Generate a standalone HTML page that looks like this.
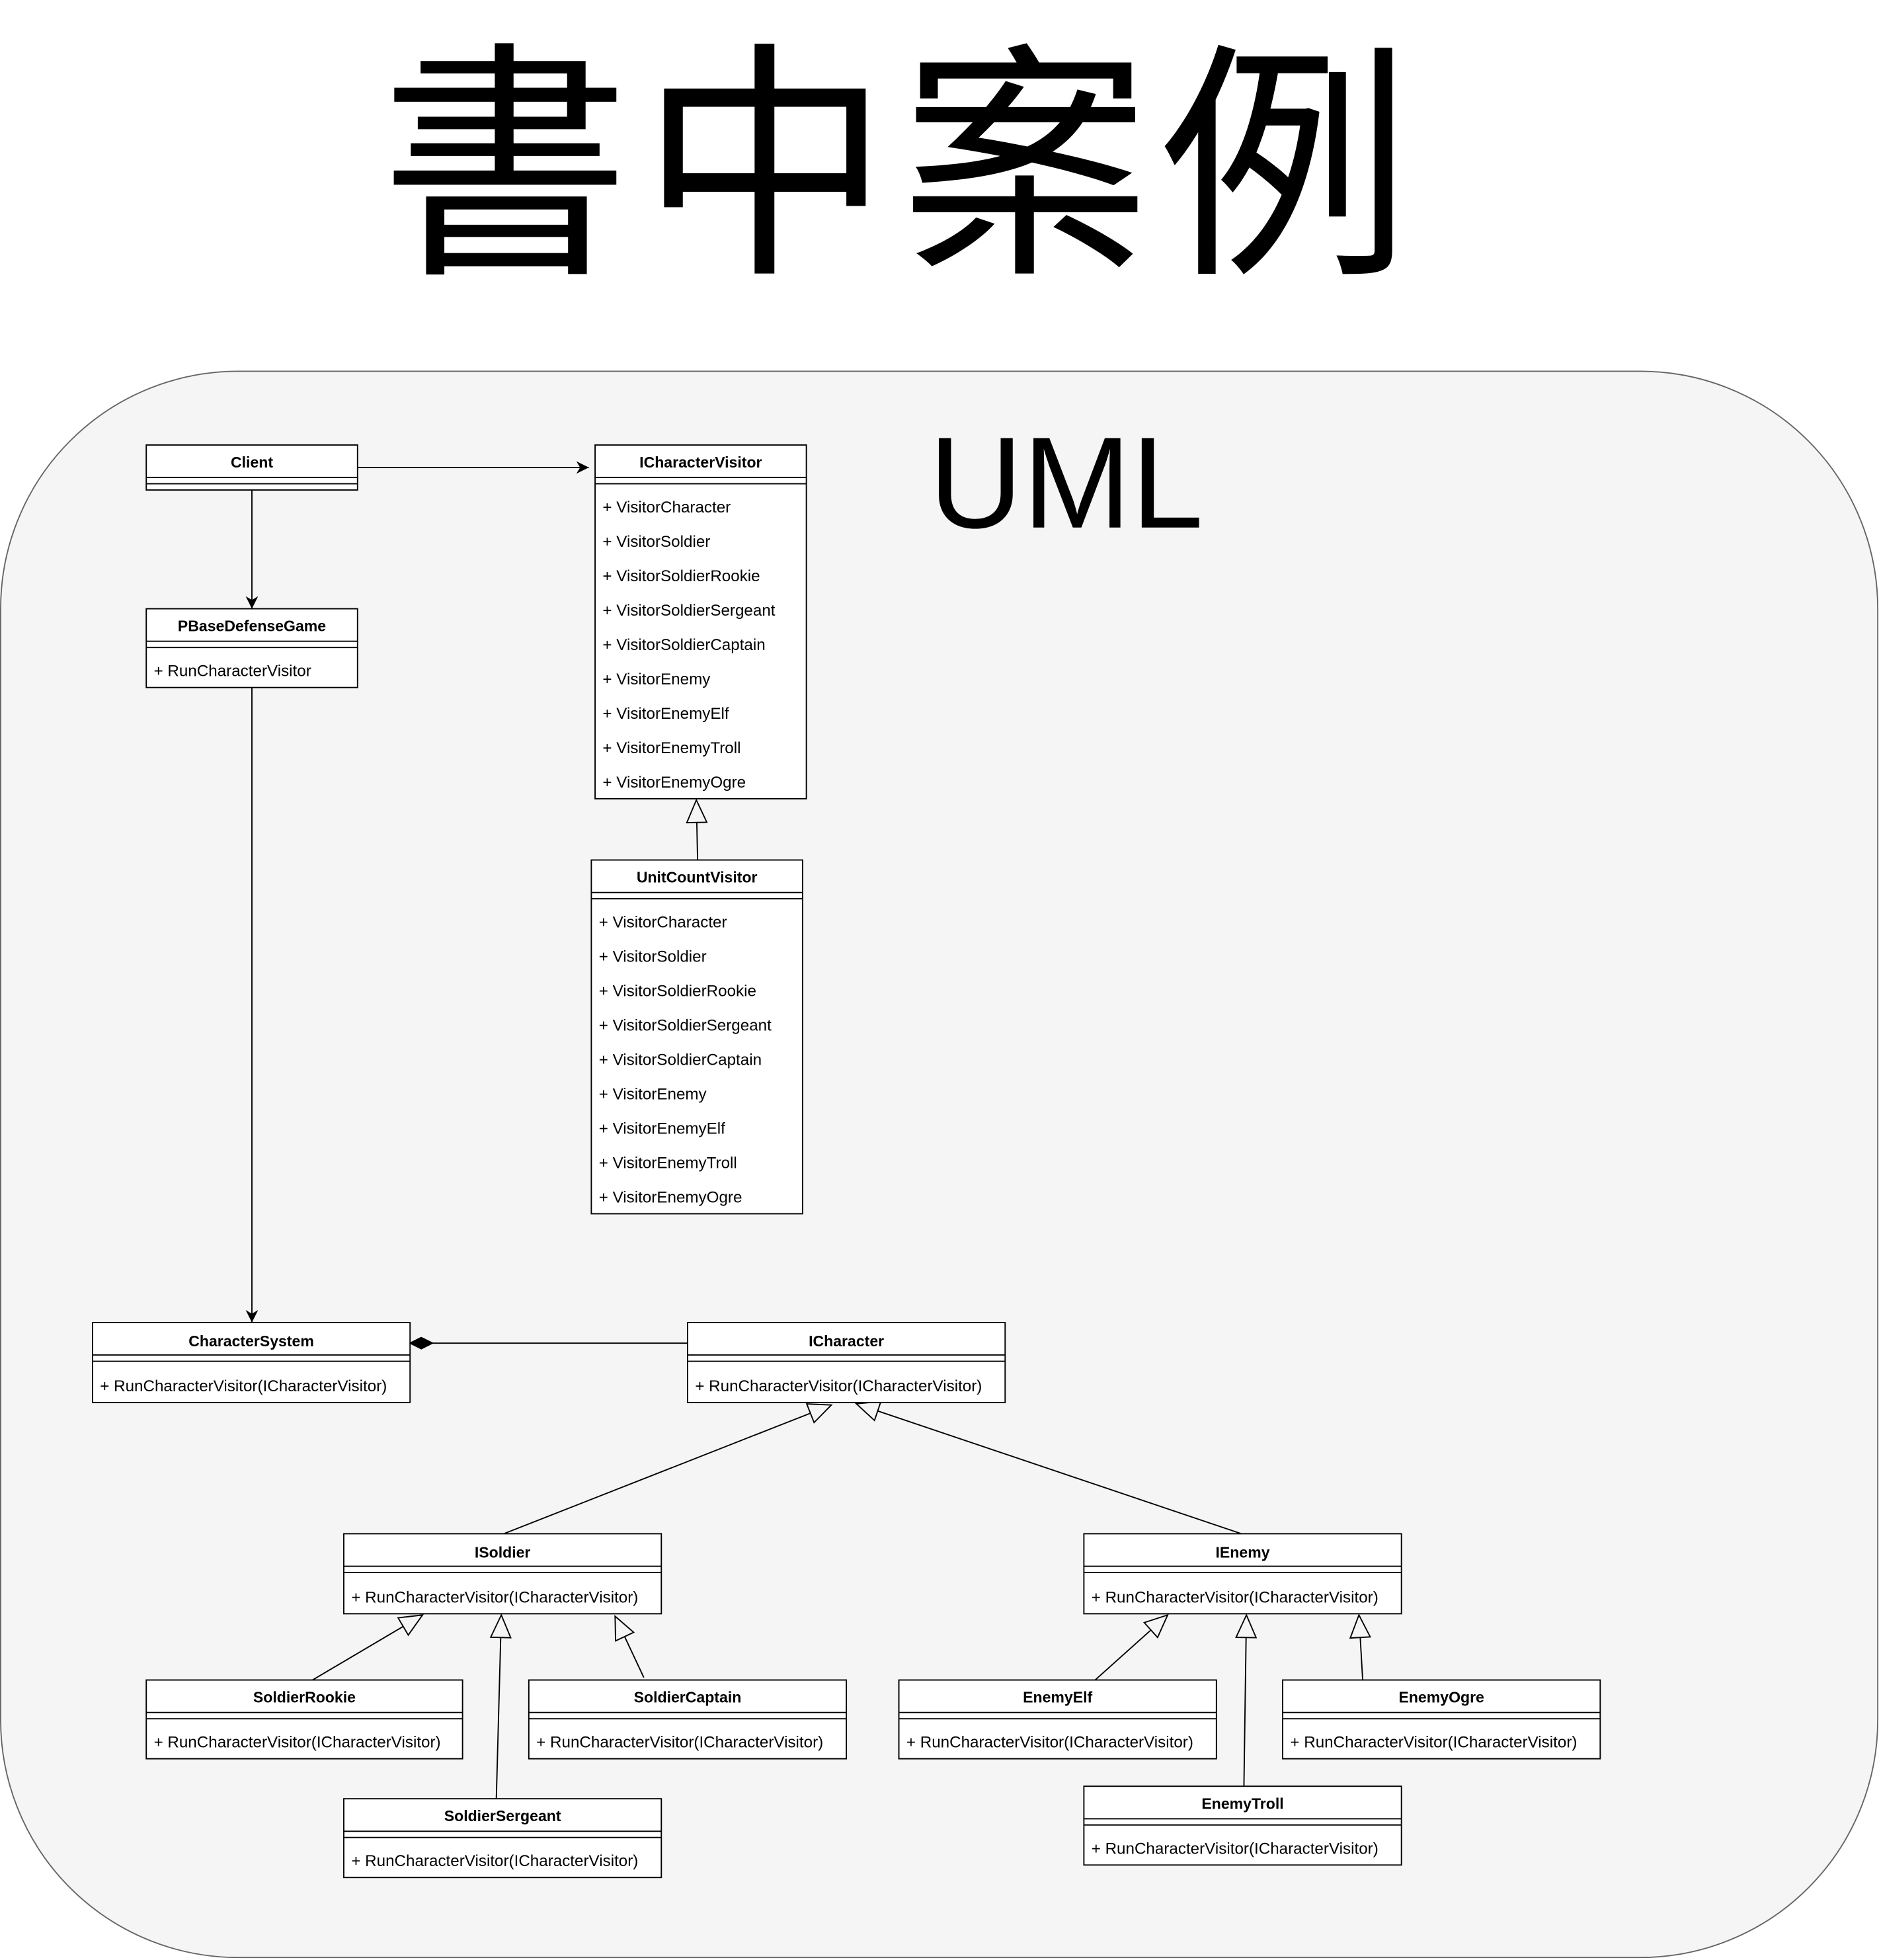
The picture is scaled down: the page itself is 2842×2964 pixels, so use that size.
<!DOCTYPE html>
<html><head><meta charset="utf-8"><style>
html,body{margin:0;padding:0;background:#fff;}
svg{display:block}
text{font-family:"Liberation Sans",Arial,sans-serif;}
.t{font-size:12.2px;font-weight:bold;text-anchor:middle}
.i{font-size:12.8px}
.b{fill:#fff;stroke:#000;stroke-width:1}
.l{stroke:#000;stroke-width:1;fill:none}
</style></head><body>
<svg width="2842" height="2964" viewBox="0 0 1503 1568" preserveAspectRatio="none" xmlns="http://www.w3.org/2000/svg">
<defs>
<marker id="tri" markerUnits="userSpaceOnUse" markerWidth="22" markerHeight="20" refX="19" refY="9" orient="auto" viewBox="0 0 22 20">
<path d="M1,1 L19,9 L1,17 Z" fill="#f5f5f5" stroke="#000" stroke-width="1"/>
</marker>
<marker id="arr" markerUnits="userSpaceOnUse" markerWidth="12" markerHeight="12" refX="10" refY="5" orient="auto" viewBox="0 0 12 10">
<path d="M0,0 L10,5 L0,10 L3,5 Z" fill="#000"/>
</marker>
</defs>
<text x="720" y="203" style="font-family:'Liberation Sans','Noto Sans CJK TC','Noto Sans CJK JP',sans-serif;font-size:200px;letter-spacing:8px" text-anchor="middle">書中案例</text>
<rect x="0.5" y="297" width="1501.5" height="1269" rx="190" ry="190" fill="#f5f5f5" stroke="#666" stroke-width="1"/>
<text x="743" y="422" style="font-size:104px">UML</text>

<!-- edges -->
<line class="l" x1="286" y1="374" x2="471" y2="374" marker-end="url(#arr)"/>
<line class="l" x1="201.5" y1="392" x2="201.5" y2="487" marker-end="url(#arr)"/>
<line class="l" x1="201.5" y1="550" x2="201.5" y2="1058" marker-end="url(#arr)"/>
<line class="l" x1="558" y1="688" x2="557" y2="640" marker-end="url(#tri)"/>
<line class="l" x1="550" y1="1074.5" x2="346" y2="1074.5"/>
<path d="M328,1074.5 L337,1070 L346,1074.5 L337,1079 Z" fill="#000" stroke="#000"/>
<line class="l" x1="403" y1="1227" x2="665" y2="1124" marker-end="url(#tri)"/>
<line class="l" x1="993" y1="1227" x2="685" y2="1123" marker-end="url(#tri)"/>
<line class="l" x1="250" y1="1344" x2="338" y2="1292" marker-end="url(#tri)"/>
<line class="l" x1="397" y1="1439" x2="401" y2="1292" marker-end="url(#tri)"/>
<line class="l" x1="515" y1="1342" x2="492" y2="1293" marker-end="url(#tri)"/>
<line class="l" x1="876" y1="1344" x2="934" y2="1292" marker-end="url(#tri)"/>
<line class="l" x1="995" y1="1429" x2="997" y2="1292" marker-end="url(#tri)"/>
<line class="l" x1="1090" y1="1344" x2="1087" y2="1292" marker-end="url(#tri)"/>

<!-- Client -->
<rect class="b" x="117" y="356" width="169" height="36"/>
<line class="l" x1="117" y1="382" x2="286" y2="382"/><line class="l" x1="117" y1="387" x2="286" y2="387"/>
<text class="t" x="201.5" y="374">Client</text>

<!-- ICharacterVisitor -->
<rect class="b" x="476" y="356" width="169" height="283"/>
<line class="l" x1="476" y1="382" x2="645" y2="382"/><line class="l" x1="476" y1="387" x2="645" y2="387"/>
<text class="t" x="560.5" y="374">ICharacterVisitor</text>
<text class="i" x="482" y="410">+ VisitorCharacter</text>
<text class="i" x="482" y="437.5">+ VisitorSoldier</text>
<text class="i" x="482" y="465">+ VisitorSoldierRookie</text>
<text class="i" x="482" y="492.5">+ VisitorSoldierSergeant</text>
<text class="i" x="482" y="520">+ VisitorSoldierCaptain</text>
<text class="i" x="482" y="547.5">+ VisitorEnemy</text>
<text class="i" x="482" y="575">+ VisitorEnemyElf</text>
<text class="i" x="482" y="602.5">+ VisitorEnemyTroll</text>
<text class="i" x="482" y="630">+ VisitorEnemyOgre</text>

<!-- PBaseDefenseGame -->
<rect class="b" x="117" y="487" width="169" height="63"/>
<line class="l" x1="117" y1="513" x2="286" y2="513"/><line class="l" x1="117" y1="518" x2="286" y2="518"/>
<text class="t" x="201.5" y="505">PBaseDefenseGame</text>
<text class="i" x="123" y="541">+ RunCharacterVisitor</text>

<!-- UnitCountVisitor -->
<rect class="b" x="473" y="688" width="169" height="283"/>
<line class="l" x1="473" y1="714" x2="642" y2="714"/><line class="l" x1="473" y1="719" x2="642" y2="719"/>
<text class="t" x="557.5" y="706">UnitCountVisitor</text>
<text class="i" x="479" y="742">+ VisitorCharacter</text>
<text class="i" x="479" y="769.5">+ VisitorSoldier</text>
<text class="i" x="479" y="797">+ VisitorSoldierRookie</text>
<text class="i" x="479" y="824.5">+ VisitorSoldierSergeant</text>
<text class="i" x="479" y="852">+ VisitorSoldierCaptain</text>
<text class="i" x="479" y="879.5">+ VisitorEnemy</text>
<text class="i" x="479" y="907">+ VisitorEnemyElf</text>
<text class="i" x="479" y="934.5">+ VisitorEnemyTroll</text>
<text class="i" x="479" y="962">+ VisitorEnemyOgre</text>

<!-- CharacterSystem -->
<rect class="b" x="74" y="1058" width="254" height="64"/>
<line class="l" x1="74" y1="1084" x2="328" y2="1084"/><line class="l" x1="74" y1="1089" x2="328" y2="1089"/>
<text class="t" x="201" y="1077">CharacterSystem</text>
<text class="i" x="80" y="1113">+ RunCharacterVisitor(ICharacterVisitor)</text>

<!-- ICharacter -->
<rect class="b" x="550" y="1058" width="254" height="64"/>
<line class="l" x1="550" y1="1084" x2="804" y2="1084"/><line class="l" x1="550" y1="1089" x2="804" y2="1089"/>
<text class="t" x="677" y="1077">ICharacter</text>
<text class="i" x="556" y="1113">+ RunCharacterVisitor(ICharacterVisitor)</text>

<!-- ISoldier -->
<rect class="b" x="275" y="1227" width="254" height="64"/>
<line class="l" x1="275" y1="1253" x2="529" y2="1253"/><line class="l" x1="275" y1="1258" x2="529" y2="1258"/>
<text class="t" x="402" y="1246">ISoldier</text>
<text class="i" x="281" y="1282">+ RunCharacterVisitor(ICharacterVisitor)</text>

<!-- IEnemy -->
<rect class="b" x="867" y="1227" width="254" height="64"/>
<line class="l" x1="867" y1="1253" x2="1121" y2="1253"/><line class="l" x1="867" y1="1258" x2="1121" y2="1258"/>
<text class="t" x="994" y="1246">IEnemy</text>
<text class="i" x="873" y="1282">+ RunCharacterVisitor(ICharacterVisitor)</text>

<!-- SoldierRookie -->
<rect class="b" x="117" y="1344" width="253" height="63"/>
<line class="l" x1="117" y1="1370" x2="370" y2="1370"/><line class="l" x1="117" y1="1375" x2="370" y2="1375"/>
<text class="t" x="243.5" y="1362">SoldierRookie</text>
<text class="i" x="123" y="1398">+ RunCharacterVisitor(ICharacterVisitor)</text>

<!-- SoldierCaptain -->
<rect class="b" x="423" y="1344" width="254" height="63"/>
<line class="l" x1="423" y1="1370" x2="677" y2="1370"/><line class="l" x1="423" y1="1375" x2="677" y2="1375"/>
<text class="t" x="550" y="1362">SoldierCaptain</text>
<text class="i" x="429" y="1398">+ RunCharacterVisitor(ICharacterVisitor)</text>

<!-- SoldierSergeant -->
<rect class="b" x="275" y="1439" width="254" height="63"/>
<line class="l" x1="275" y1="1465" x2="529" y2="1465"/><line class="l" x1="275" y1="1470" x2="529" y2="1470"/>
<text class="t" x="402" y="1457">SoldierSergeant</text>
<text class="i" x="281" y="1493">+ RunCharacterVisitor(ICharacterVisitor)</text>

<!-- EnemyElf -->
<rect class="b" x="719" y="1344" width="254" height="63"/>
<line class="l" x1="719" y1="1370" x2="973" y2="1370"/><line class="l" x1="719" y1="1375" x2="973" y2="1375"/>
<text class="t" x="846" y="1362">EnemyElf</text>
<text class="i" x="725" y="1398">+ RunCharacterVisitor(ICharacterVisitor)</text>

<!-- EnemyOgre -->
<rect class="b" x="1026" y="1344" width="254" height="63"/>
<line class="l" x1="1026" y1="1370" x2="1280" y2="1370"/><line class="l" x1="1026" y1="1375" x2="1280" y2="1375"/>
<text class="t" x="1153" y="1362">EnemyOgre</text>
<text class="i" x="1032" y="1398">+ RunCharacterVisitor(ICharacterVisitor)</text>

<!-- EnemyTroll -->
<rect class="b" x="867" y="1429" width="254" height="63"/>
<line class="l" x1="867" y1="1455" x2="1121" y2="1455"/><line class="l" x1="867" y1="1460" x2="1121" y2="1460"/>
<text class="t" x="994" y="1447">EnemyTroll</text>
<text class="i" x="873" y="1483">+ RunCharacterVisitor(ICharacterVisitor)</text>
</svg>
</body></html>
